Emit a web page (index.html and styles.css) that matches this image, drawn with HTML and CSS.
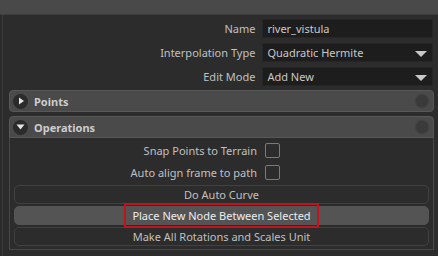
FILE: index.html
```html
<!DOCTYPE html>
<html>
<head>
<meta charset="utf-8">
<link rel="stylesheet" href="styles.css">
</head>
<body>
<div class="topbar"></div>
<div class="main">
  <div class="form">
    <div class="row"><span class="label">Name</span><div class="field">river_vistula</div></div>
    <div class="row"><span class="label">Interpolation Type</span><div class="field select">Quadratic Hermite<span class="caret"></span></div></div>
    <div class="row"><span class="label">Edit Mode</span><div class="field select">Add New<span class="caret"></span></div></div>
  </div>
  <div class="section closed">
    <div class="header"><span class="toggle"><svg width="8" height="8" viewBox="0 0 8 8"><path d="M2 0.5 L7 4 L2 7.5 Z" fill="#e6e6e6"/></svg></span><span class="title">Points</span><span class="dot"></span></div>
  </div>
  <div class="section open">
    <div class="header"><span class="toggle"><svg width="9" height="8" viewBox="0 0 9 8"><path d="M0.5 1.5 L8.5 1.5 L4.5 6.5 Z" fill="#e6e6e6"/></svg></span><span class="title">Operations</span><span class="dot"></span></div>
    <div class="body">
      <div class="row crow"><span class="label">Snap Points to Terrain</span><span class="check"></span></div>
      <div class="row crow"><span class="label">Auto align frame to path</span><span class="check"></span></div>
      <div class="btn">Do Auto Curve</div>
      <div class="btn active"><span class="mark">Place New Node Between Selected</span></div>
      <div class="btn">Make All Rotations and Scales Unit</div>
    </div>
  </div>
</div>
</body>
</html>
```
FILE: styles.css
```css
html, body {
  margin: 0;
  padding: 0;
}
body {
  width: 438px;
  height: 256px;
  overflow: hidden;
  background: #2b2b2b;
  font-family: "Noto Sans", "Open Sans", sans-serif;
  font-size: 11px;
  color: #c0c0c0;
}
.topbar {
  height: 14px;
  background: #494949;
  border-bottom: 1px solid #3c3c3c;
}
.main {
  height: 241px;
  margin-left: 2px;
  border-left: 1px solid #3a3a3a;
  padding: 4px 5px 0 5px;
  background: #2c2c2c;
}
.form {
  display: flex;
  flex-direction: column;
  gap: 5px;
  padding-bottom: 4px;
}
.row {
  display: flex;
  align-items: center;
  height: 19px;
}
.label {
  width: 248px;
  text-align: right;
  padding-right: 7px;
  white-space: nowrap;
}
.field {
  position: relative;
  width: 165px;
  height: 17px;
  line-height: 17px;
  padding-left: 4px;
  background: #1d1d1d;
  border: 1px solid #262626;
  color: #c8c8c8;
}
.caret {
  position: absolute;
  right: 5px;
  top: 7px;
  width: 0;
  height: 0;
  border-left: 6px solid transparent;
  border-right: 6px solid transparent;
  border-top: 6px solid #c8c8c8;
}
.section {
  width: 425px;
  margin-left: 1px;
  margin-bottom: 4px;
}
.header {
  display: flex;
  align-items: center;
  height: 20px;
  background: #4a4a4a;
  border: 1px solid #585858;
  border-radius: 4px 4px 0 0;
  padding: 0 5px 0 3px;
}
.closed .header {
  border-radius: 4px;
}
.toggle {
  width: 15px;
  height: 15px;
  border-radius: 50%;
  background: #2b2b2b;
  display: flex;
  align-items: center;
  justify-content: center;
}
.title {
  flex: 1;
  margin-left: 6px;
  font-weight: bold;
  color: #cdcdcd;
}
.dot {
  width: 12px;
  height: 12px;
  border-radius: 50%;
  background: #3a3a3a;
  box-shadow: 0 0 1px 1px #404040;
}
.body {
  border: 1px solid #474747;
  border-top: none;
  padding: 3px 4px 3px 4px;
}
.crow {
  height: 19px;
  margin-bottom: 3px;
}
.body .label {
  width: 243px;
  padding-right: 8px;
}
.check {
  width: 13px;
  height: 13px;
  border: 1px solid #7a7a7a;
  border-radius: 2px;
}
.btn {
  height: 17px;
  line-height: 17px;
  margin-bottom: 2px;
  text-align: center;
  border: 1px solid #414141;
  border-radius: 5px;
  background: #2c2c2c;
  color: #c0c0c0;
}
.btn:last-child {
  margin-bottom: 0;
}
.btn.active {
  background: #545454;
  border-color: #545454;
  color: #ececec;
}
.mark {
  display: inline-block;
  height: 21px;
  line-height: 21px;
  margin: -2px 0;
  vertical-align: top;
  padding: 0 6px;
  outline: 2px solid #c4121a;
}
```
